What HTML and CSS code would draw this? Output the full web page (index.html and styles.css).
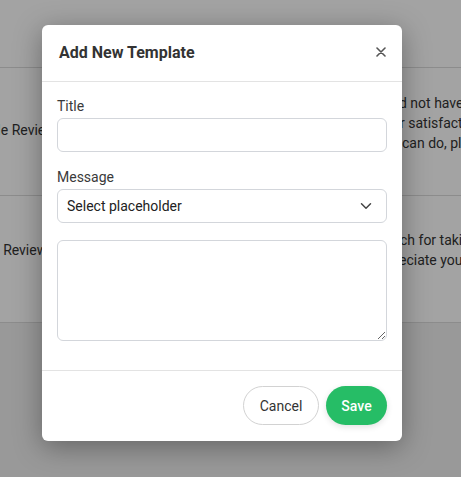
FILE: index.html
```html
<!DOCTYPE html>
<html>
<head>
<meta charset="utf-8">
<link rel="stylesheet" href="styles.css">
</head>
<body>
<div class="page">
  <div class="page-head"></div>
  <div class="row row-one">
    <div class="cell-left"><span class="name">Google Review</span></div>
    <div class="cell-right">
      <div class="line l1">d not have the best experience.</div>
      <div class="line l2">r satisfaction matters to us.</div>
      <div class="line l3">can do, please let us know.</div>
    </div>
  </div>
  <div class="row row-two">
    <div class="cell-left"><span class="name">Yelp Review</span></div>
    <div class="cell-right">
      <div class="line l4">ch for taking the time.</div>
      <div class="line l5">eciate your feedback.</div>
    </div>
  </div>
  <div class="page-foot"></div>
</div>
<div class="overlay"></div>
<div class="modal-wrap">
  <div class="modal">
    <div class="modal-header">
      <h2 class="modal-title">Add New Template</h2>
      <button class="close" aria-label="Close">
        <svg width="10" height="10" viewBox="0 0 10 10"><path d="M1 1L9 9M9 1L1 9" stroke="#555" stroke-width="1.6" stroke-linecap="round"/></svg>
      </button>
    </div>
    <div class="modal-body">
      <div class="group">
        <label class="label">Title</label>
        <input class="field" type="text">
      </div>
      <div class="group">
        <label class="label">Message</label>
        <div class="select">
          <span>Select placeholder</span>
          <svg width="12" height="8" viewBox="0 0 12 8"><path d="M1.5 1.8L6 6.2L10.5 1.8" fill="none" stroke="#444" stroke-width="1.5" stroke-linecap="round" stroke-linejoin="round"/></svg>
        </div>
        <textarea class="area"></textarea>
      </div>
    </div>
    <div class="modal-footer">
      <button class="btn btn-cancel">Cancel</button>
      <button class="btn btn-save">Save</button>
    </div>
  </div>
</div>
</body>
</html>
```

FILE: styles.css
```css
* { box-sizing: border-box; }
html, body { margin: 0; padding: 0; }
body {
  width: 461px;
  height: 477px;
  overflow: hidden;
  font-family: Roboto, "Liberation Sans", Arial, sans-serif;
  color: #333;
  background: #f0f0f0;
  position: relative;
}
.page { background: #fff; }
.page-head { height: 68px; border-bottom: 1px solid #dcdcdc; }
.row {
  display: flex;
  height: 128px;
  border-bottom: 1px solid #dcdcdc;
  font-size: 14px;
  line-height: 20px;
}
.row-two { height: 127px; }
.cell-left { width: 399px; white-space: nowrap; overflow: hidden; }
.row-one .cell-left { padding-top: 52px; text-indent: -36px; }
.row-two .cell-left { padding-top: 44px; text-indent: -27px; }
.cell-right {
  flex: 1;
  white-space: nowrap;
  overflow: hidden;
}
.row-one .cell-right { padding-top: 25px; }
.row-two .cell-right { padding-top: 34px; }
.l1 { margin-left: 0; }
.l2 { margin-left: 1px; }
.l3 { margin-left: 3px; }
.l4 { margin-left: 1px; }
.l5 { margin-left: 0; }
.overlay {
  position: absolute;
  inset: 0;
  background: rgba(0, 0, 0, 0.36);
}
.modal-wrap {
  position: absolute;
  inset: 0;
  display: flex;
  justify-content: flex-start;
  padding-top: 25px;
  padding-left: 42px;
}
.modal {
  width: 360px;
  height: 416px;
  background: #fff;
  border-radius: 6px;
  box-shadow: 0 6px 28px rgba(0, 0, 0, 0.35);
  display: flex;
  flex-direction: column;
}
.modal-header {
  height: 57px;
  border-bottom: 1px solid #e3e3e3;
  display: flex;
  align-items: center;
  justify-content: space-between;
  padding: 0 15px 2px 17px;
}
.modal-title {
  margin: 0;
  font-size: 16px;
  font-weight: 700;
  color: #333;
}
.close {
  border: 0;
  background: none;
  padding: 0;
  width: 12px;
  height: 12px;
  display: flex;
  align-items: center;
  justify-content: center;
}
.modal-body {
  padding: 14px 15px 0 15px;
  flex: 1;
  border-bottom: 1px solid #e3e3e3;
}
.group { display: flex; flex-direction: column; }
.group + .group { margin-top: 15px; }
.label {
  font-size: 14px;
  line-height: 20px;
  color: #3a3a3a;
  margin-bottom: 2px;
}
.field, .select, .area {
  width: 330px;
  border: 1px solid #d3d6db;
  border-radius: 6px;
  background: #fff;
}
.field { height: 34px; }
.select {
  height: 34px;
  display: flex;
  align-items: center;
  justify-content: space-between;
  padding: 0 14px 0 9px;
  font-size: 14px;
  color: #222;
}
.area {
  margin-top: 17px;
  height: 101px;
  resize: vertical;
  font-family: inherit;
}
.modal-footer {
  height: 70px;
  display: flex;
  align-items: center;
  justify-content: flex-end;
  gap: 7px;
  padding: 0 15px 1px;
}
.btn {
  height: 39px;
  border-radius: 20px;
  font-family: inherit;
  font-size: 14px;
}
.btn-cancel {
  width: 76px;
  background: #fff;
  border: 1px solid #d2d2d2;
  color: #333;
}
.btn-save {
  width: 61px;
  background: #26bd66;
  border: 0;
  color: #fff;
  font-weight: 500;
  box-shadow: 0 2px 6px rgba(0, 0, 0, 0.12);
}
```
